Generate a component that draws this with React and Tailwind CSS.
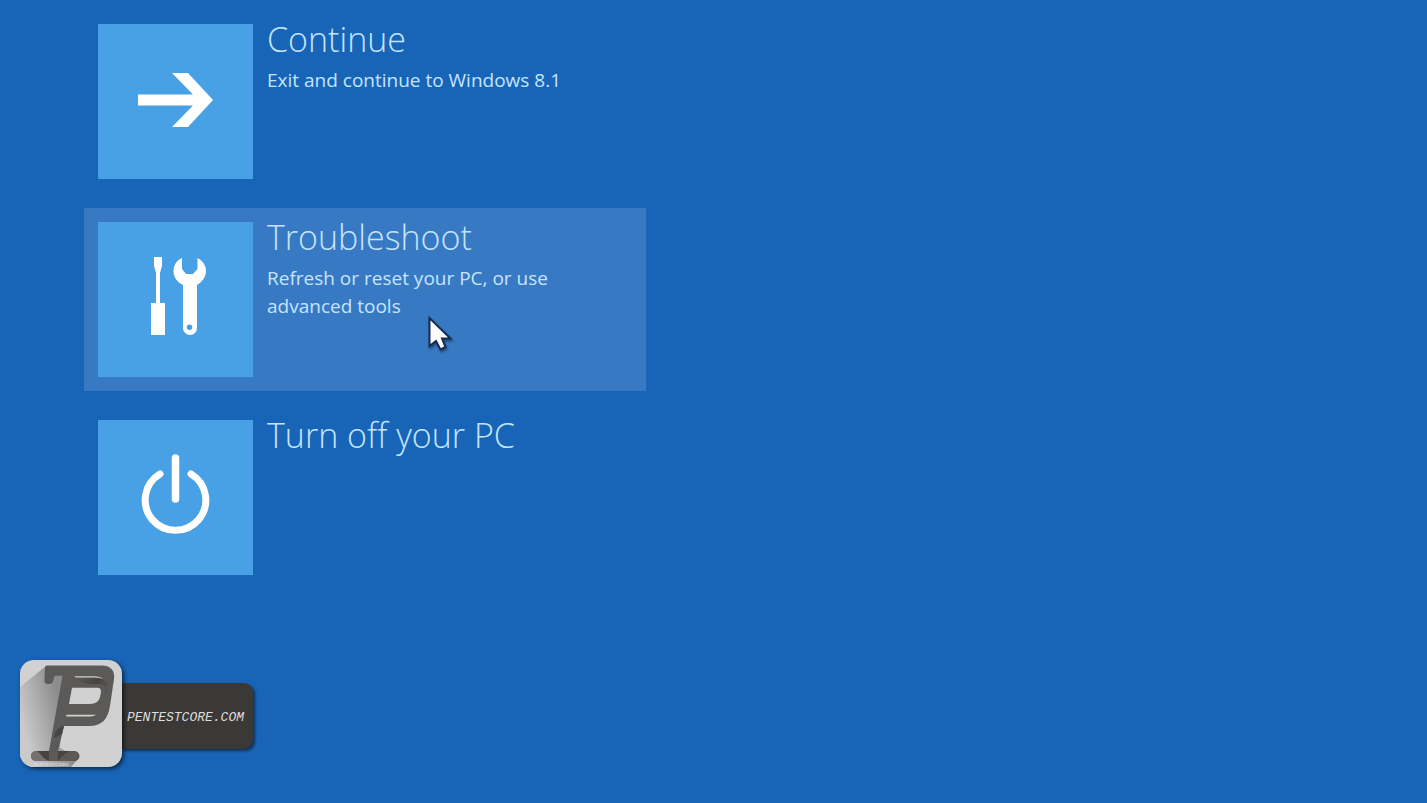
function ArrowIcon() {
  return (
    <svg viewBox="0 0 155 155" className="size-full fill-white" aria-hidden="true">
      <path d="M40 70.5H95L74 49H90L115 76 90 103H74L95 81.5H40Z" />
    </svg>
  );
}

function ToolsIcon() {
  return (
    <svg viewBox="0 0 155 155" className="size-full fill-white" aria-hidden="true">
      <path d="M56 35H64V44L62 51V81H67V113H53V81H58V51L56 44Z" />
      <path
        fillRule="evenodd"
        d="M84 36V47L88 52H95L99.500 47V36C104 38 108 43 108 49C108 55 104 60 99 63V106A7 7 0 0 1 85 106V63C79 60 75.500 55 75.500 49C75.500 43 79 38 84 36ZM91.500 102.500A2.700 2.700 0 1 0 91.500 108A2.700 2.700 0 1 0 91.500 102.500Z"
      />
    </svg>
  );
}

function PowerIcon() {
  return (
    <svg
      viewBox="0 0 155 155"
      className="size-full fill-none stroke-white [stroke-linecap:round]"
      aria-hidden="true"
    >
      <path d="M62 54A30.300 30.300 0 1 0 93 54" strokeWidth="7" />
      <path d="M77.500 38V79" strokeWidth="7.500" />
    </svg>
  );
}

function Cursor() {
  return (
    <svg
      viewBox="0 0 28 38"
      className="absolute left-[343px] top-[107px] h-[38px] w-[28px] drop-shadow-[1px_2px_1px_rgba(0,0,0,0.4)]"
      aria-hidden="true"
    >
      <path
        d="M2.500 3V31L9 26 13.500 34.500 18.500 32 15 23.500H23.500Z"
        fill="#fff"
        stroke="#152c50"
        strokeWidth="2"
      />
    </svg>
  );
}

function Logo() {
  return (
    <svg viewBox="0 0 102 107" className="size-full" aria-hidden="true">
      <defs>
        <linearGradient id="fade" gradientUnits="userSpaceOnUse" x1="2" y1="62" x2="42" y2="52">
          <stop offset="0" stopColor="#cacaca" />
          <stop offset="0.4" stopColor="#b2b2b2" />
          <stop offset="1" stopColor="#8c8c8c" />
        </linearGradient>
        <linearGradient id="bowl" gradientUnits="userSpaceOnUse" x1="56" y1="18" x2="86" y2="34">
          <stop offset="0" stopColor="#5b5a58" />
          <stop offset="0.6" stopColor="#454442" />
          <stop offset="1" stopColor="#5b5a58" />
        </linearGradient>
      </defs>
      <rect width="102" height="107" fill="#d1d1d1" />
      <path d="M0 27L26 6 43 16 40 88 59 98 51 107H0Z" fill="url(#fade)" />
      <path
        fillRule="evenodd"
        fill="#5b5a58"
        d="M27 5.500H82C91 5.500 95 11 94 19L90 46C88 59 82 66 69 66H44L38 91H54C57 91 59.500 93 59.500 96C59.500 99 57 101 54 101H17C13 101 11 99 11 96C11 93 13 91 17 91H29L42.500 15.700H36C33.500 15.700 34 18 33.500 20C33 23 31 24 28.500 24C25.500 24 24 22 24.500 19L25 8C25 6.500 25.500 5.500 27 5.500ZM52 27.700L49 44H70C76 44 79 41 80 37L81 32C81 29 80 27.700 77 27.700Z"
      />
      <path
        d="M54 18H76C85 18 90 24 88 32L84 50C83 54 81 57 77 58C81 52 83 42 85 32C86 27 83 24 78 24H70C64 24 59 22 54 18Z"
        fill="url(#bowl)"
      />
      <path d="M54 16.200H73C78 16.200 81 17 83 19C80 17.600 76 17.500 72 17.500H56Z" fill="#d1d1d1" />
      <path d="M46.500 54.700H76C74 56.300 71 56.500 67 56.500H46Z" fill="#d1d1d1" />
      <path d="M44 66L42 74 34 78C35 71 38 67 44 66Z" fill="#454442" />
      <path d="M17 91C22 95 23 99 30 101H17C9 101 9 91 17 91Z" fill="#737270" />
      <path d="M17 91H29V101C23 99 22 94 17 91Z" fill="#454442" />
      <path d="M38 91H50C44 94 41 97 38 101Z" fill="#454442" />
      <text
        x="14"
        y="106"
        fontSize="5"
        fontFamily="Liberation Serif, serif"
        fill="#e6e6e6"
      >
        PENTESTCORE
      </text>
    </svg>
  );
}

function Option({ title, detail, icon, active, children }) {
  return (
    <button
      type="button"
      className={`relative flex w-full items-start gap-3.5 p-3.5 text-left ${active ? "bg-[#3879c3]" : ""}`}
    >
      <span className="block size-[155px] shrink-0 bg-[#48a1e4]">{icon}</span>
      <span className="flex min-w-0 flex-col gap-2">
        <span className="-mt-1 text-[34px] font-light leading-[38px] text-[#c4e4ff]">{title}</span>
        {detail && (
          <span className="text-[19px] font-medium leading-[28px] text-[#c5e5ff]">{detail}</span>
        )}
      </span>
      {children}
    </button>
  );
}

export default function App() {
  return (
    <div className="flex min-h-screen flex-col justify-between gap-8 bg-[#1864b6] font-['Open_Sans','Noto_Sans',sans-serif]">
      <main className="pl-21 pt-2.5">
        <div className="flex max-w-[562px] flex-col gap-[15px]">
          <Option title="Continue" detail="Exit and continue to Windows 8.1" icon={<ArrowIcon />} />
          <Option
            title="Troubleshoot"
            detail="Refresh or reset your PC, or use advanced tools"
            icon={<ToolsIcon />}
            active
          >
            <Cursor />
          </Option>
          <Option title="Turn off your PC" icon={<PowerIcon />} />
        </div>
      </main>
      <footer className="flex pb-9 pl-5">
        <a href="https://pentestcore.com" className="flex items-center">
          <span className="z-10 block h-[107px] w-[102px] overflow-hidden rounded-[14px] shadow-[2px_2px_4px_rgba(0,0,0,0.6)]">
            <Logo />
          </span>
          <span className="mt-1 flex h-[66px] w-[131px] items-center rounded-r-[9px] bg-[#3a3937] pl-[5px] pt-1 font-['Liberation_Mono',monospace] text-[13px] italic text-[#dedede] shadow-[2px_2px_3px_rgba(0,0,0,0.5)]">
            PENTESTCORE.COM
          </span>
        </a>
      </footer>
    </div>
  );
}
